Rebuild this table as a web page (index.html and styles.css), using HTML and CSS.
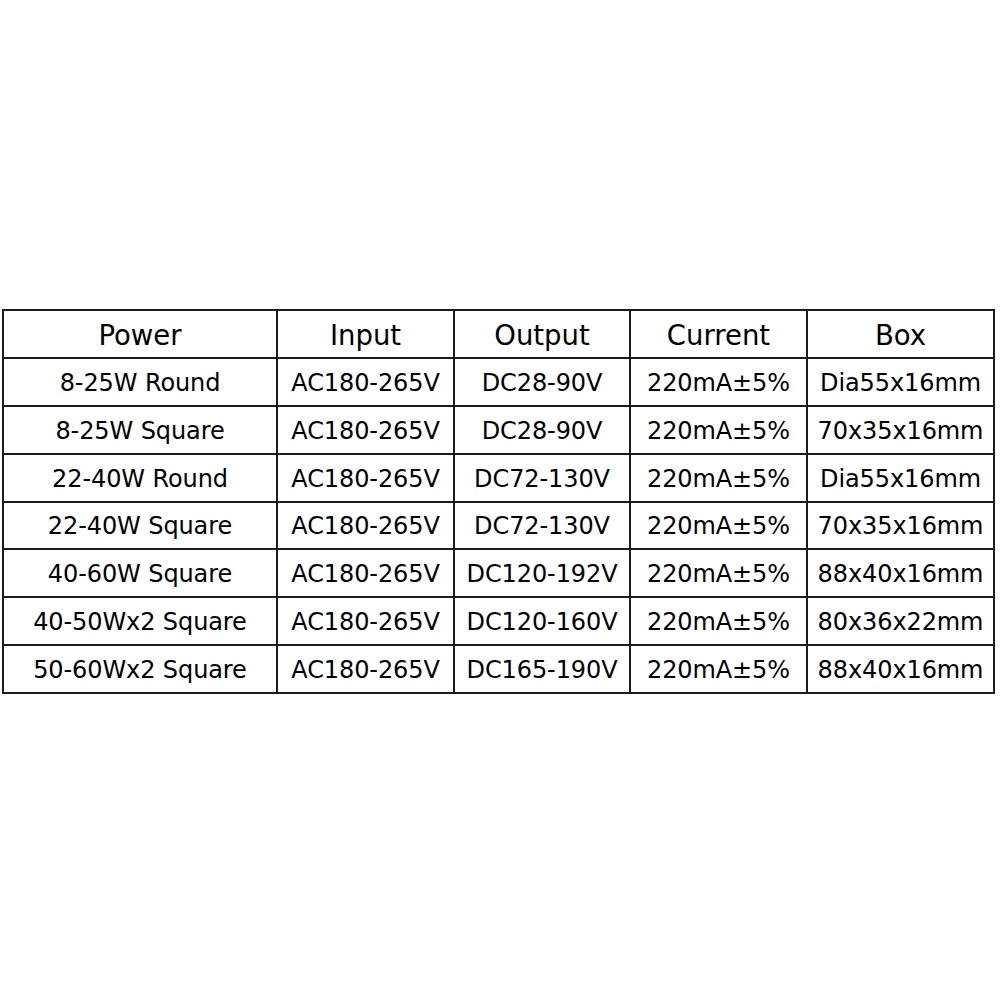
FILE: index.html
```html
<!DOCTYPE html>
<html>
<head>
<meta charset="utf-8">
<link rel="stylesheet" href="styles.css">
</head>
<body>
<div class="page">
<table class="spec">
<colgroup>
<col class="c-power"><col class="c-input"><col class="c-output"><col class="c-current"><col class="c-box">
</colgroup>
<thead>
<tr class="head"><th>Power</th><th>Input</th><th>Output</th><th>Current</th><th>Box</th></tr>
</thead>
<tbody>
<tr><td>8-25W Round</td><td>AC180-265V</td><td>DC28-90V</td><td>220mA±5%</td><td>Dia55x16mm</td></tr>
<tr><td>8-25W Square</td><td>AC180-265V</td><td>DC28-90V</td><td>220mA±5%</td><td>70x35x16mm</td></tr>
<tr><td>22-40W Round</td><td>AC180-265V</td><td>DC72-130V</td><td>220mA±5%</td><td>Dia55x16mm</td></tr>
<tr><td>22-40W Square</td><td>AC180-265V</td><td>DC72-130V</td><td>220mA±5%</td><td>70x35x16mm</td></tr>
<tr><td>40-60W Square</td><td>AC180-265V</td><td>DC120-192V</td><td>220mA±5%</td><td>88x40x16mm</td></tr>
<tr><td>40-50Wx2 Square</td><td>AC180-265V</td><td>DC120-160V</td><td>220mA±5%</td><td>80x36x22mm</td></tr>
<tr><td>50-60Wx2 Square</td><td>AC180-265V</td><td>DC165-190V</td><td>220mA±5%</td><td>88x40x16mm</td></tr>
</tbody>
</table>
</div>
</body>
</html>
```
FILE: styles.css
```css
html, body {
  margin: 0;
  padding: 0;
  background: #ffffff;
}
.page {
  width: 1000px;
  height: 1000px;
  box-sizing: border-box;
  padding-top: 309px;
  padding-left: 2px;
}
.spec {
  border-collapse: collapse;
  table-layout: fixed;
  width: 993px;
  font-family: "DejaVu Sans", Verdana, sans-serif;
  color: #000;
}
.c-power { width: 274px; }
.c-input { width: 177px; }
.c-output { width: 176px; }
.c-current { width: 177px; }
.c-box { width: 187px; }
.spec th, .spec td {
  border: 2px solid #1c1c1c;
  text-align: center;
  vertical-align: middle;
  padding: 2px 0 0 0;
  white-space: nowrap;
}
.spec th {
  font-weight: normal;
  font-size: 27.5px;
  height: 44px;
}
.spec td {
  font-size: 24px;
  letter-spacing: -0.1px;
  height: 43.85px;
}
```
